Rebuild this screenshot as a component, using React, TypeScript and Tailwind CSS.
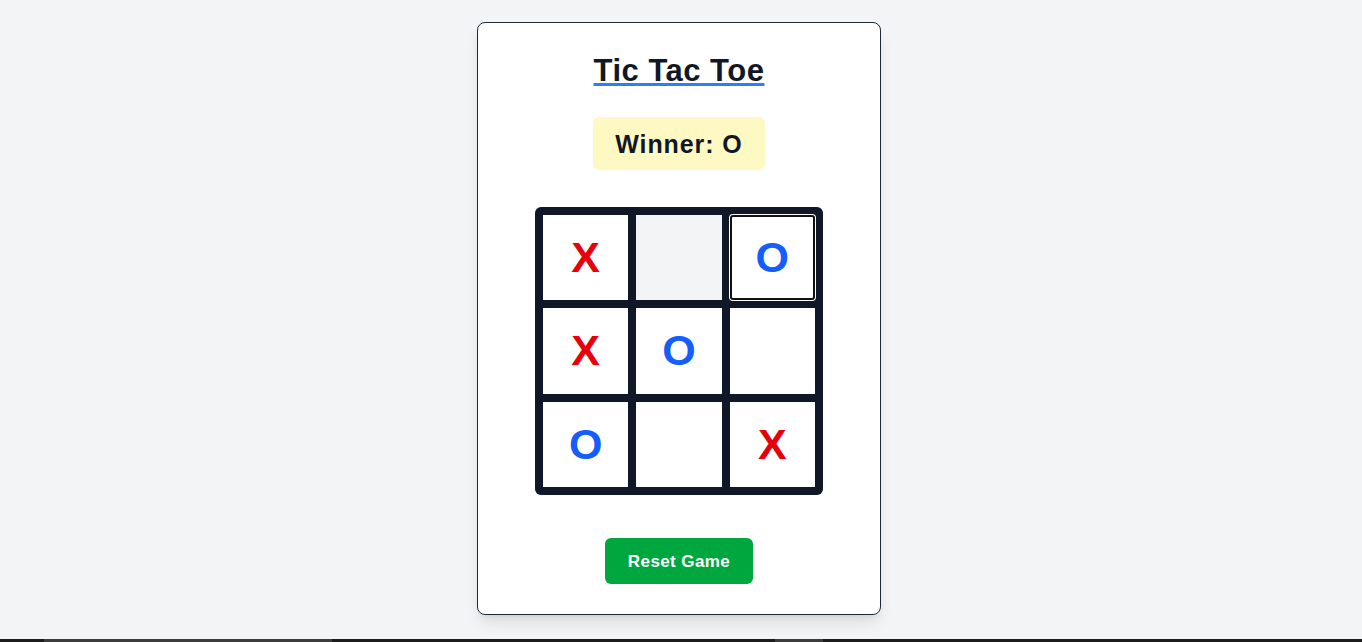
import { useState } from 'react';

type Mark = 'X' | 'O' | null;

const initialBoard: Mark[] = ['X', null, 'O', 'X', 'O', null, 'O', null, 'X'];

export default function App() {
  const [board] = useState<Mark[]>(initialBoard);
  const winner = 'O';

  return (
    <div className="h-[642px] flex flex-col bg-gray-100 font-['Liberation_Sans',Arial,sans-serif] overflow-hidden">
      <div className="flex-1 flex justify-center items-start pt-[22px] pr-[4px]">
        <div className="w-[404px] bg-white border border-gray-800 rounded-lg shadow-lg flex flex-col items-center pt-[30px] pb-[30px]">
          <h1 className="text-[31px] leading-9 font-bold text-gray-900 tracking-[0.5px] underline decoration-blue-500 decoration-[3px] underline-offset-[2px]">
            Tic Tac Toe
          </h1>

          <div className="mt-[28px] bg-yellow-100 rounded-md px-[22px] pt-[11px] pb-[10px] text-[25px] leading-8 font-bold text-gray-900 tracking-[0.9px]">
            Winner: {winner}
          </div>

          <div className="mt-[37px] w-72 h-72 p-2 bg-gray-900 rounded-md grid grid-cols-3 grid-rows-3 gap-2">
            {board.map((cell, i) => (
              <button
                key={i}
                className={`flex items-center justify-center text-[43px] font-bold leading-none ${
                  i === 1 ? 'bg-gray-100' : 'bg-white'
                } ${i === 2 ? 'rounded-[3px] shadow-[0_0_0_1px_#ffffff,inset_0_0_0_2px_#101010]' : ''} ${
                  cell === 'X' ? 'text-red-600' : 'text-blue-600'
                }`}
              >
                {cell}
              </button>
            ))}
          </div>

          <button className="mt-[43px] bg-green-600 text-white font-bold text-[17px] leading-6 tracking-[0.4px] rounded-md px-[23px] pt-[12px] pb-[10px]">
            Reset Game
          </button>
        </div>
      </div>

      <div className="h-[3px] bg-[#1c1c1c] flex">
        <div className="w-[44px]" />
        <div className="w-[288px] bg-[#3c3c3c]" />
        <div className="w-[443px]" />
        <div className="w-[48px] bg-[#3c3c3c]" />
      </div>
    </div>
  );
}
